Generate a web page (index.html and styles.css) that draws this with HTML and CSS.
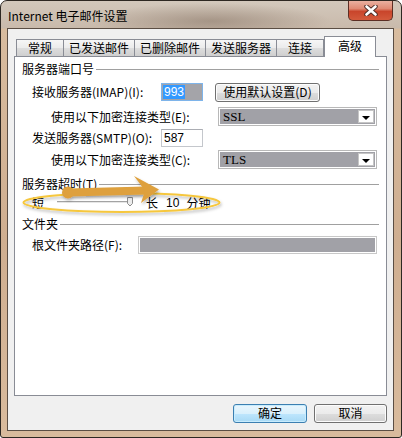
FILE: index.html
```html
<!DOCTYPE html>
<html lang="zh-CN">
<head>
  <meta charset="UTF-8">
  <title>Internet 电子邮件设置</title>
  <link rel="stylesheet" href="styles.css">
</head>
<body>

<div class="window">
  <div class="titlebar">
    <span class="title">Internet 电子邮件设置</span>
    <div class="close">
      <svg width="14" height="11" viewBox="0 0 14 11">
        <path d="M2.5 1.5 L11.5 9.5 M11.5 1.5 L2.5 9.5" stroke="#4a2a24" stroke-width="4.4" stroke-linecap="round"/>
        <path d="M2.5 1.5 L11.5 9.5 M11.5 1.5 L2.5 9.5" stroke="#fff" stroke-width="2.6" stroke-linecap="round"/>
      </svg>
    </div>
  </div>

  <div class="client">
    <div class="tabs">
      <div class="tab short">常规</div>
      <div class="tab">已发送邮件</div>
      <div class="tab">已删除邮件</div>
      <div class="tab">发送服务器</div>
      <div class="tab short">连接</div>
      <div class="tab active">高级</div>
    </div>

    <div class="panel">
      <div class="group-head"><span>服务器端口号</span><i class="rule"></i></div>

      <div class="row r1">
        <span class="lbl-port">接收服务器(IMAP)(I):</span>
        <div class="textbox focus"><span class="sel">993</span></div>
        <div class="btn btn-defaults">使用默认设置(D)</div>
      </div>
      <div class="row indent r2">
        <span class="lbl-enc">使用以下加密连接类型(E):</span>
        <div class="combo"><span class="combo-text">SSL</span><span class="drop"><i class="tri"></i></span></div>
      </div>
      <div class="row r3">
        <span class="lbl-port">发送服务器(SMTP)(O):</span>
        <div class="textbox">587</div>
      </div>
      <div class="row indent r4">
        <span class="lbl-enc">使用以下加密连接类型(C):</span>
        <div class="combo"><span class="combo-text">TLS</span><span class="drop"><i class="tri"></i></span></div>
      </div>

      <div class="group-head g2"><span>服务器超时(T)</span><i class="rule"></i></div>
      <div class="row r-slider">
        <span>短</span>
        <svg class="slider" width="80" height="20" viewBox="0 0 80 20">
          <line x1="0" y1="8.5" x2="74" y2="8.5" stroke="#a3a3a3"/>
          <line x1="0" y1="9.5" x2="74" y2="9.5" stroke="#e6e6e6"/>
          <path d="M70.5 4.5 h5 v6 l-2.5 2.5 l-2.5 -2.5 z" fill="#ececec" stroke="#8c8c8c"/>
        </svg>
        <span class="long">长</span>
        <span class="mins">10</span>
        <span class="unit">分钟</span>
      </div>

      <div class="group-head g3"><span>文件夹</span><i class="rule"></i></div>
      <div class="row r-path">
        <span class="lbl-root">根文件夹路径(F):</span>
        <div class="pathbox"></div>
      </div>
    </div>

    <div class="actions">
      <div class="btn primary">确定</div>
      <div class="btn cancel">取消</div>
    </div>
  </div>
</div>

<!-- annotation drawn over the dialog -->
<svg class="annot" width="402" height="438" viewBox="0 0 402 438">
  <defs>
    <filter id="sh" x="-10%" y="-50%" width="120%" height="200%">
      <feDropShadow dx="1" dy="2" stdDeviation="1.5" flood-color="#000" flood-opacity="0.28"/>
    </filter>
  </defs>
  <ellipse cx="121.5" cy="202.5" rx="98" ry="9.5" fill="none" stroke="#f6c73e" stroke-width="2" filter="url(#sh)"/>
  <g fill="#dea03c" stroke="none" filter="url(#sh)">
    <circle cx="68" cy="192.5" r="6"/>
    <path d="M68 188.6 L146 186.5 L146 194.5 L68 196.4 Z"/>
    <path d="M134 176 L159 189.5 L141 203 L145 190.5 Z"/>
  </g>
</svg>

</body>
</html>
```

FILE: styles.css
```css
body {
  margin: 0;
  font-family: "Noto Sans CJK SC", "Noto Sans", sans-serif;
  font-size: 12px;
  color: #000;
  background: #fff;
}
.window {
  width: 402px;
  height: 438px;
  box-sizing: border-box;
  border: 1px solid #2e2822;
  border-radius: 7px 7px 3px 3px;
  padding: 0 7px 6px 6px;
  display: flex;
  flex-direction: column;
  background:
    radial-gradient(ellipse 120px 18px at 210px 20px, rgba(120,100,85,0.45), rgba(120,100,85,0) 100%),
    linear-gradient(180deg, #d3c8bc 0, #c9baab 27px, #d8bc9f 28px, #cfae90 55%, #d9bb9d 100%);
}
.titlebar {
  height: 27px;
  display: flex;
  align-items: center;
  flex-shrink: 0;
}
.title {
  padding-left: 1px;
  font-size: 12px;
  line-height: 16px;
  margin-top: 2px;
}
.close {
  margin-left: auto;
  align-self: flex-start;
  width: 45px;
  height: 20px;
  box-sizing: border-box;
  border: 1px solid #5c2e24;
  border-top: none;
  border-radius: 0 0 5px 5px;
  background: linear-gradient(180deg, #eab0a0 0, #e08a74 40%, #c9452b 55%, #d35a3c 100%);
  display: flex;
  align-items: center;
  justify-content: center;
  margin-right: 1px;
}
.client {
  flex: 1;
  border: 1px solid #5b4e44;
  background: #f0f0f0;
  padding: 7px 6px 7px 6px;
}

/* tabs */
.tabs {
  display: flex;
  align-items: flex-end;
  height: 20px;
  padding-left: 2px;
}
.tab {
  box-sizing: border-box;
  height: 17px;
  padding: 0 5px;
  line-height: 16px;
  border: 1px solid #898c95;
  border-bottom: none;
  margin-right: -1px;
  background: linear-gradient(180deg, #f6f6f6 0, #ebebeb 50%, #dddddd 51%, #cfcfcf 100%);
  text-align: center;
  white-space: nowrap;
}
.tab.short {
  padding: 0 11px;
}
.tab.active {
  position: relative;
  z-index: 2;
  height: 21px;
  margin-bottom: -1px;
  margin-left: 1px;
  padding: 1px 13px 0;
  background: #fff;
  text-align: left;
}
.panel {
  position: relative;
  height: 340px;
  box-sizing: border-box;
  border: 1px solid #898c95;
  background: #fff;
  padding: 4px 7px 0 7px;
}

/* group headers */
.group-head {
  display: flex;
  align-items: center;
  height: 16px;
  line-height: 16px;
  gap: 2px;
}
.group-head .rule {
  flex: 1;
  height: 1px;
  background: #a0a0a0;
  margin-top: 1px;
}
.g2 { margin-top: 7px; }
.g3 { margin-top: 3px; }

/* rows */
.row {
  display: flex;
  align-items: center;
  padding-left: 10px;
  line-height: 16px;
  white-space: nowrap;
}
.row.indent { padding-left: 29px; }
.r1 { margin-top: 6px; height: 18px; }
.r2 { margin-top: 6px; height: 19px; }
.r3 { margin-top: 3px; height: 18px; }
.r4 { margin-top: 3px; height: 19px; }
.r-slider { margin-top: 1px; height: 20px; }
.r-path { margin-top: 4px; height: 18px; }

.lbl-port { width: 129px; }
.lbl-enc { width: 167px; }
.lbl-root { width: 106px; }

.textbox {
  width: 42px;
  height: 18px;
  box-sizing: border-box;
  border: 1px solid #c4c7cc;
  border-top-color: #abadb3;
  padding-left: 2px;
  font-family: "Liberation Sans", sans-serif;
  font-size: 12px;
  line-height: 16px;
  background: #fff;
}
.textbox.focus {
  border-color: #7eb4ea;
  background: #a4a4a9;
  padding-left: 1px;
}
.sel {
  display: inline-block;
  background: #3399ff;
  color: #fff;
  padding: 0 1px;
  line-height: 14px;
  margin-top: 1px;
}
.btn {
  box-sizing: border-box;
  height: 19px;
  border: 1px solid #707070;
  border-radius: 3px;
  background: linear-gradient(180deg, #f2f2f2 0, #ebebeb 50%, #dddddd 51%, #cfcfcf 100%);
  box-shadow: inset 0 0 0 1px #fcfcfc;
  text-align: center;
  line-height: 16px;
}
.btn-defaults {
  width: 105px;
  margin-left: 12px;
}
.combo {
  width: 159px;
  height: 19px;
  box-sizing: border-box;
  border: 1px solid #b8b8b8;
  box-shadow: inset 0 0 0 1px #fff;
  background: #a1a1a7;
  display: flex;
  align-items: center;
  padding: 0 2px 0 4px;
}
.combo-text {
  flex: 1;
  font-family: "Liberation Serif", serif;
  font-size: 13px;
  line-height: 15px;
}
.drop {
  width: 16px;
  height: 13px;
  box-sizing: border-box;
  border: 1px solid #c6c6c6;
  background: #fff;
  display: flex;
  align-items: center;
  justify-content: center;
}
.tri {
  display: block;
  width: 0;
  height: 0;
  border-left: 4px solid transparent;
  border-right: 4px solid transparent;
  border-top: 4px solid #000;
  margin-top: 2px;
}
.slider {
  margin-left: 13px;
}
.long { margin-left: 9px; }
.mins {
  margin-left: 8px;
  font-family: "Liberation Sans", sans-serif;
}
.unit { margin-left: 7px; }
.pathbox {
  width: 239px;
  height: 18px;
  box-sizing: border-box;
  border: 1px solid #c8c8c8;
  box-shadow: inset 0 0 0 1px #fff;
  background: #a1a1a7;
}

/* dialog buttons */
.actions {
  display: flex;
  justify-content: flex-end;
  gap: 7px;
  margin-top: 8px;
  padding-right: 0;
}
.primary {
  width: 74px;
  border-color: #3c7fb1;
  background: linear-gradient(180deg, #eaf6fd 0, #d9f0fc 50%, #bee6fd 51%, #a7d9f5 100%);
  box-shadow: inset 0 0 0 1px #c8ecfd;
}
.cancel {
  width: 73px;
}
.annot {
  position: absolute;
  left: 0;
  top: 0;
  pointer-events: none;
}
```
